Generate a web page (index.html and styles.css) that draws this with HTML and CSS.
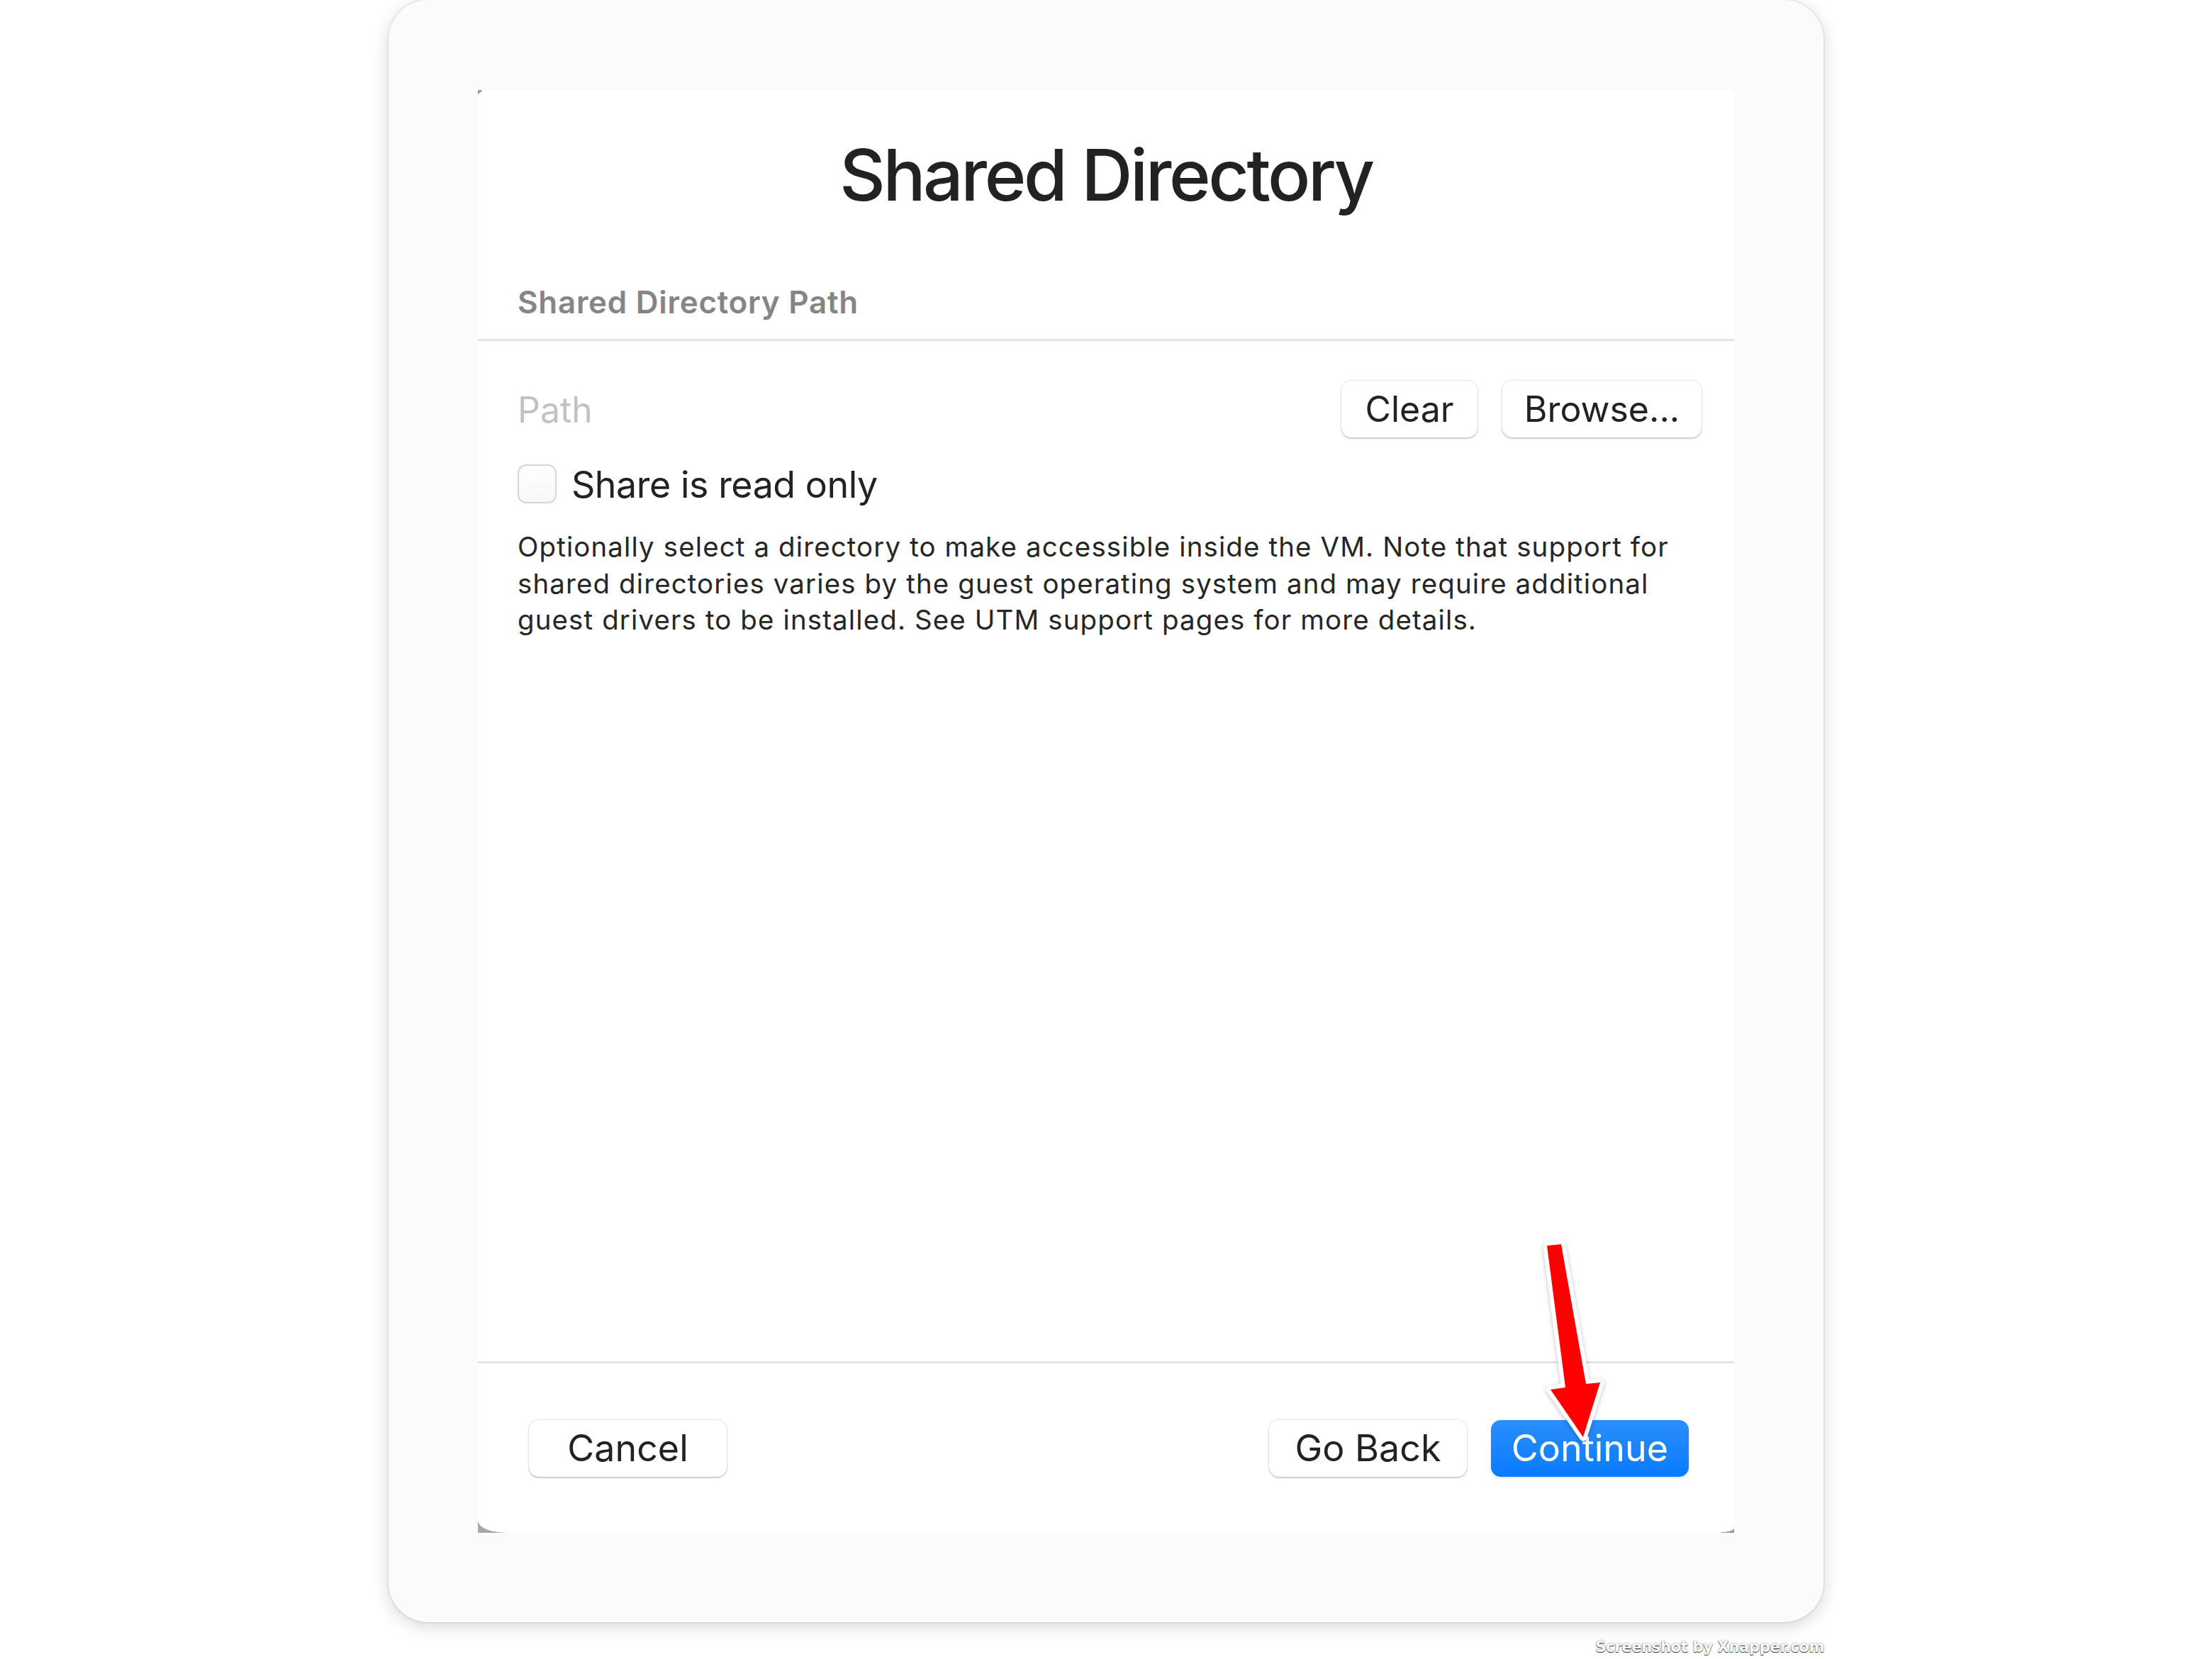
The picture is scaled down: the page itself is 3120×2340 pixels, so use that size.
FILE: index.html
```html
<!DOCTYPE html>
<html lang="en">
<head>
<meta charset="utf-8">
<title>Shared Directory</title>
<link rel="stylesheet" href="styles.css">
</head>
<body>
<div class="stage">
  <div class="window">
    <div class="panel">
      <h1 class="title">Shared Directory</h1>
      <div class="section-head">Shared Directory Path</div>
      <div class="sep"></div>
      <div class="content">
        <div class="path-row">
          <span class="placeholder">Path</span>
          <div class="path-btns">
            <button class="btn btn-clear">Clear</button>
            <button class="btn btn-browse">Browse...</button>
          </div>
        </div>
        <label class="check-row">
          <span class="checkbox"></span>
          <span class="check-label">Share is read only</span>
        </label>
        <p class="desc">Optionally select a directory to make accessible inside the VM. Note that support for<br>shared directories varies by the guest operating system and may require additional<br>guest drivers to be installed. See UTM support pages for more details.</p>
      </div>
      <div class="spacer"></div>
      <div class="sep"></div>
      <div class="footer">
        <button class="btn btn-wide">Cancel</button>
        <div class="footer-right">
          <button class="btn btn-wide">Go Back</button>
          <button class="btn btn-wide btn-primary">Continue</button>
        </div>
      </div>
      <span class="corner corner-tl"></span>
      <span class="corner corner-bl"></span>
      <span class="corner corner-br"></span>
    </div>
  </div>
  <div class="watermark">Screenshot by Xnapper.com</div>
  <svg class="arrow" width="3120" height="2340" viewBox="0 0 3120 2340">
    <defs>
      <filter id="ash" x="-50%" y="-50%" width="200%" height="200%">
        <feDropShadow dx="0" dy="2" stdDeviation="3" flood-color="#000" flood-opacity="0.25"/>
      </filter>
    </defs>
    <polygon points="2182,1757 2202,1755 2237,1952 2257,1950 2233,2027 2187,1960 2208,1957" fill="#ff0000" stroke="#ffffff" stroke-width="11" stroke-linejoin="round" paint-order="stroke" filter="url(#ash)"/>
  </svg>
</div>
</body>
</html>
```
FILE: styles.css
```css
* { box-sizing: border-box; }

html, body {
  margin: 0;
  padding: 0;
  background: #ffffff;
}

body {
  font-family: Inter, "Liberation Sans", Arial, sans-serif;
  color: #262626;
}

.stage {
  position: relative;
  width: 3120px;
  height: 2340px;
  overflow: hidden;
}

.window {
  width: 2024px;
  height: 2288px;
  margin: 0 auto;
  padding: 127px 126px 126px 126px;
  background: #fbfbfb;
  border-radius: 56px;
  box-shadow: 0 0 0 2px rgba(0, 0, 0, 0.05), 0 6px 24px rgba(0, 0, 0, 0.16);
}

.panel {
  position: relative;
  height: 100%;
  background: #ffffff;
  display: flex;
  flex-direction: column;
}

.title {
  margin: 70px 0 0 0;
  font-size: 100px;
  line-height: 100px;
  font-weight: 500;
  text-align: center;
  color: #222222;
  letter-spacing: -3.5px;
}

.section-head {
  margin-top: 107px;
  padding-left: 56px;
  font-size: 44px;
  line-height: 44px;
  font-weight: 600;
  color: #858585;
  letter-spacing: 0.7px;
}

.sep {
  height: 3px;
  background: #e4e4e4;
  flex: none;
}

.section-head + .sep {
  margin-top: 30px;
}

.content {
  padding: 0 46px 0 56px;
}

.path-row {
  margin-top: 56px;
  height: 80px;
  display: flex;
  align-items: center;
  justify-content: space-between;
}

.placeholder {
  font-size: 50px;
  color: #c2c2c2;
  padding-top: 2px;
}

.path-btns {
  display: flex;
  gap: 35px;
}

.btn {
  height: 80px;
  border: none;
  border-radius: 14px;
  background: #ffffff;
  font-family: Inter, "Liberation Sans", Arial, sans-serif;
  font-size: 50px;
  color: #222222;
  padding: 0;
  box-shadow: 0 0 0 1.5px rgba(0, 0, 0, 0.07), 0 2px 2px rgba(0, 0, 0, 0.16);
}

.btn-clear { width: 192px; }
.btn-browse { width: 281px; }
.btn-wide { width: 279px; }

.btn-primary {
  color: #ffffff;
  background: linear-gradient(#2a8ffb, #0a7aff);
  box-shadow: 0 1px 3px rgba(0, 110, 255, 0.25);
}

.check-row {
  margin-top: 38px;
  display: flex;
  align-items: center;
  height: 55px;
}

.checkbox {
  width: 55px;
  height: 55px;
  border-radius: 12px;
  border: 2px solid #d6d6d6;
  background: linear-gradient(#ffffff, #f7f7f7);
  box-shadow: inset 0 1px 1px rgba(0, 0, 0, 0.03);
  margin-right: 21px;
}

.check-label {
  font-size: 52px;
  color: #222222;
  letter-spacing: -0.5px;
  padding-top: 2px;
}

.desc {
  margin: 36px 0 0 0;
  font-size: 38.5px;
  line-height: 51.5px;
  color: #262626;
  letter-spacing: 1.1px;
}

.spacer {
  flex: 1;
}

.footer {
  margin: 80px 0 79px 0;
  padding: 0 64px 0 72px;
  display: flex;
  justify-content: space-between;
}

.footer .btn {
  font-size: 52px;
  padding-bottom: 2px;
}

.footer-right {
  display: flex;
  gap: 34px;
}

.corner {
  position: absolute;
  display: block;
}

.corner-tl {
  left: 0;
  top: 0;
  width: 7px;
  height: 7px;
  background: linear-gradient(135deg, #9a9a9a 50%, transparent 50%);
}

.corner-bl {
  left: 0;
  bottom: 0;
  width: 40px;
  height: 16px;
  background: radial-gradient(40px 16px at 100% 0, #ffffff 96%, #a8a8a8 100%);
}

.corner-br {
  right: 0;
  bottom: 0;
  width: 28px;
  height: 6px;
  background: radial-gradient(28px 6px at 0 0, #ffffff 96%, #9a9a9a 100%);
}

.watermark {
  position: absolute;
  right: 547px;
  top: 2311px;
  font-family: "DejaVu Sans", Verdana, sans-serif;
  font-weight: bold;
  font-size: 21px;
  letter-spacing: -0.3px;
  color: #ffffff;
  text-shadow: 0 1px 1px rgba(0, 0, 0, 0.8), 0 0 2px rgba(0, 0, 0, 0.6);
}

.arrow {
  position: absolute;
  left: 0;
  top: 0;
  pointer-events: none;
}
```
